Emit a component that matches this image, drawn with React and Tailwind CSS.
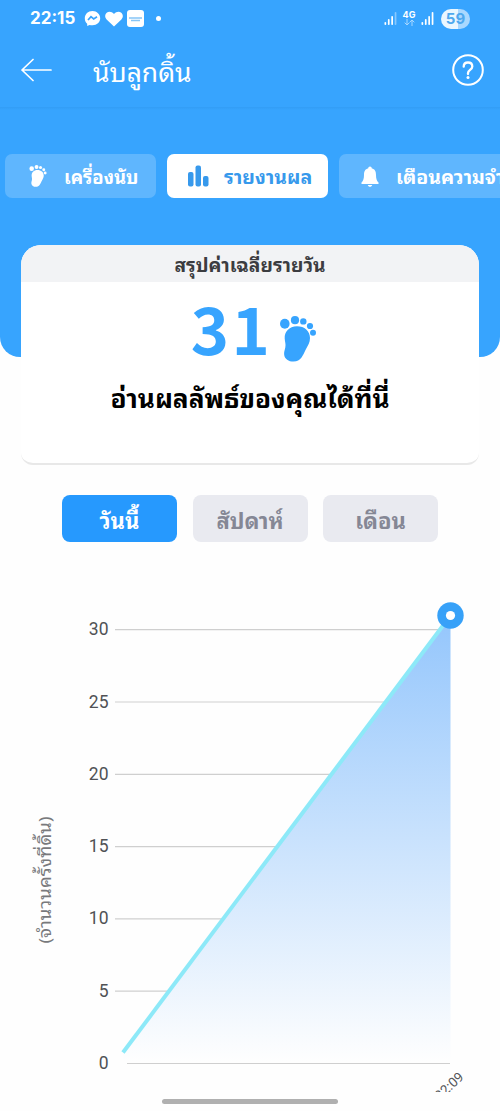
import React from 'react';

const THAI = "font-['Noto_Sans_Thai_Looped','Noto_Sans_Thai','Noto_Sans',sans-serif]";

function Foot({ className }) {
  return (
    <svg viewBox="0 0 36 46" className={className} fill="currentColor">
      <ellipse cx="4.8" cy="7.8" rx="4.8" ry="5" />
      <circle cx="15" cy="4.2" r="4.1" />
      <circle cx="23.3" cy="5.4" r="3.2" />
      <circle cx="30" cy="10" r="3.1" />
      <circle cx="33" cy="16.8" r="3" />
      <path d="M17 10.3C9 10.3 4.3 16 4.7 22.500C4.900 26 6 28 5.300 31.500C4.700 34.500 3.800 36 4.200 39C4.800 43 8.500 45.600 13.500 45.600C21 45.600 23 39 25.500 34C28 29.500 30 26.500 30 22C30 15 24.500 10.300 17 10.300Z" />
    </svg>
  );
}

function Signal({ faded }) {
  return (
    <svg width="13" height="15" viewBox="0 0 13 15" fill="#fff">
      <rect x="0.500" y="11" width="1.700" height="3" rx="0.800" />
      <rect x="3.900" y="8" width="1.700" height="6" rx="0.800" />
      <rect x="7.300" y="5" width="1.700" height="9" rx="0.800" />
      <rect x="10.700" y="1" width="1.700" height="13" rx="0.800" opacity={faded ? 0.4 : 1} />
    </svg>
  );
}

function StatusBar() {
  return (
    <div className="flex h-[37px] items-center text-white">
      <span className="ml-[30px] w-[46px] text-[17px] leading-none font-bold font-[Inter,sans-serif] whitespace-nowrap">22:15</span>
      <svg className="ml-2" width="17" height="17" viewBox="0 0 17 17">
        <path d="M8.500 1C4 1 .8 4.200.8 8.300c0 2.300.9 4.200 2.400 5.500V16l2.300-1.100c1 .3 1.900.4 3 .4 4.400 0 7.700-3.100 7.700-7S12.900 1 8.500 1Z" fill="#fff" />
        <path d="m4 10 3-3.300 2.700 2.200L13 6.800" fill="none" stroke="#37a4fe" strokeWidth="1.700" />
      </svg>
      <svg className="ml-1" width="18" height="16" viewBox="0 0 18 16" fill="#fff">
        <path d="M9 15.500 1.600 8.400C-.4 6.400-.2 3.300 1.700 1.700 3.700 0 6.900.4 9 3c2.100-2.600 5.300-3 7.300-1.300 1.900 1.600 2.100 4.700.1 6.700Z" />
      </svg>
      <svg className="ml-1" width="17" height="17" viewBox="0 0 17 17">
        <rect width="17" height="17" rx="3" fill="#fff" />
        <path d="M2 8h13M4 10.500h9" stroke="#87c5f6" strokeWidth="1.300" />
      </svg>
      <i className="ml-[12px] size-[5px] rounded-full bg-white" />
      <div className="mr-[30px] ml-auto flex items-center">
        <Signal faded />
        <div className="ml-[6px] flex w-3 flex-col items-center">
          <span className="text-[9px] leading-[8px] font-bold font-[Inter,sans-serif]">4G</span>
          <svg width="11" height="7" viewBox="0 0 11 7" fill="none" stroke="#a8d7ff" strokeWidth="1">
            <path d="M3 0v6M.7 3.700 3 6l2.300-2.300M8 7V1M5.700 3.300 8 1l2.300 2.300" />
          </svg>
        </div>
        <div className="ml-[6px] flex"><Signal /></div>
        <div className="ml-[7px] flex h-5 w-[29px] items-center justify-center rounded-full bg-[linear-gradient(90deg,#eaf7ff_59%,#a9d8ff_59%)] text-[15px] leading-none font-bold text-[#4fa9ee] font-[Inter,sans-serif]">59</div>
      </div>
    </div>
  );
}

function Chart() {
  const ticks = [30, 25, 20, 15, 10, 5, 0];
  return (
    <svg width="500" height="500" viewBox="0 592 500 500" className="block">
      <defs>
        <linearGradient id="area" x1="0" y1="0" x2="0" y2="1">
          <stop offset="0" stopColor="#94c6fc" />
          <stop offset="1" stopColor="#fefefe" />
        </linearGradient>
      </defs>
      {ticks.map((t) => {
        const y = 1063.5 - t * 14.46;
        return (
          <g key={t}>
            <line x1={t === 0 ? 127 : 115} x2="450" y1={y} y2={y} stroke="#cfcfcf" strokeWidth="1.200" />
            <text x="108.500" y={y + 5.5} textAnchor="end" fontSize="17.500" fill="#505255" className="font-[Roboto,sans-serif]">{t}</text>
          </g>
        );
      })}
      <path d="M123 1052.500 450.500 615.500V1062H123Z" fill="url(#area)" />
      <path d="M123 1052.500 450.500 615.500" stroke="#8de9f8" strokeWidth="4" strokeLinecap="butt" />
      <circle cx="450.500" cy="615.500" r="13.200" fill="#37a1f8" />
      <circle cx="450.500" cy="615.500" r="4.600" fill="#fff" />
      <text transform="translate(51 880) rotate(-90)" textAnchor="middle" textLength="127" lengthAdjust="spacingAndGlyphs" fontSize="17" fill="#78797c" className={THAI}>(จำนวนครั้งที่ดิ้น)</text>
      <text transform="translate(464.500 1078) rotate(-43)" textAnchor="end" fontSize="13.500" fill="#55575a" className="font-[Roboto,sans-serif]">22:09</text>
    </svg>
  );
}

export default function App() {
  return (
    <div className={`flex h-[1111px] w-[500px] flex-col overflow-hidden bg-[#fefefe] ${THAI}`}>
      <header className="h-[107px] shrink-0 bg-[#37a4fe]">
        <StatusBar />
        <div className="flex h-[66px] items-center text-white">
          <svg className="ml-[21px]" width="31" height="24" viewBox="0 0 31 24" fill="none" stroke="#fff" strokeWidth="1.700" strokeLinecap="round" strokeLinejoin="round">
            <path d="M12 1.500 1 12l11 10.500M1 12h29" />
          </svg>
          <h1 className="ml-[41px] text-[26.500px] leading-none whitespace-nowrap">นับลูกดิ้น</h1>
          <svg className="mr-4 ml-auto" width="32" height="32" viewBox="0 0 32 32" fill="none" stroke="#fff" strokeWidth="2">
            <circle cx="16" cy="16" r="14.800" />
            <path d="M11.700 12.700c0-2.500 1.800-4.200 4.300-4.200s4.300 1.600 4.300 4c0 3.300-4.300 3.500-4.300 6.500v1" strokeWidth="2.300" strokeLinecap="round" />
            <circle cx="16" cy="23.500" r="1.500" fill="#fff" stroke="none" />
          </svg>
        </div>
      </header>
      <section className="h-[250px] shrink-0 rounded-b-[20px] bg-[linear-gradient(#329df5,#37a4fe_3px)]">
        <nav className="mt-[47px] ml-[5px] flex gap-[11px] overflow-hidden text-[18.500px] leading-none font-bold text-white">
          <div className="flex h-11 w-[151px] shrink-0 items-center rounded-[7px] bg-[#5fb6fe] pl-[24px]">
            <Foot className="h-[22px] w-[18px]" />
            <span className="ml-[17px] whitespace-nowrap">เครื่องนับ</span>
          </div>
          <div className="flex h-11 w-[161px] shrink-0 items-center rounded-[7px] bg-white pl-[21px] text-[#3799ec]">
            <svg width="21" height="22" viewBox="0 0 21 22" fill="currentColor">
              <rect y="7" width="5.500" height="14.500" rx="2" />
              <rect x="7.500" y="0.500" width="5.500" height="21" rx="2" />
              <rect x="15" y="11" width="5.500" height="10.500" rx="2" />
            </svg>
            <span className="ml-[15px] text-[19.500px] whitespace-nowrap">รายงานผล</span>
          </div>
          <div className="flex h-11 w-[196px] shrink-0 items-center rounded-[7px] bg-[#5fb6fe] pl-[22px]">
            <svg width="18" height="21" viewBox="0 0 18 21" fill="currentColor">
              <path d="M9 0.500c1.100 0 1.700.8 1.700 1.700C14 3 15 5.500 15 9c0 4 .8 5.700 2.500 7.500V18H.5v-1.500C2.200 14.700 3 13 3 9c0-3.500 1-6 4.300-6.800C7.300 1.300 7.900.5 9 .5ZM6.800 19h4.400c-.3 1.200-1.100 1.800-2.200 1.800S7.100 20.200 6.800 19Z" />
            </svg>
            <span className="ml-[17px] text-[19.500px] whitespace-nowrap">เตือนความจำ</span>
          </div>
        </nav>
      </section>
      <section className="z-10 mx-[21px] mt-[-112px] flex h-[220px] shrink-0 flex-col items-center overflow-hidden rounded-t-[20px] rounded-b-[12px] border-b-2 border-[#e8e8e8] bg-white">
        <h2 className="flex h-[37px] w-full items-center justify-center bg-[#f2f3f5] text-[19.200px] leading-none font-bold text-[#3b3c40]">สรุปค่าเฉลี่ยรายวัน</h2>
        <div className="mt-[15px] flex h-[60px] items-center pl-[7px] text-[#37a4fe]">
          <span className="text-[65px] tracking-[2.500px] leading-none font-bold font-['Noto_Sans_CJK_SC',sans-serif]">31</span>
          <Foot className="mt-[23px] ml-[8px] h-[46px] w-9" />
        </div>
        <p className="mt-[26px] text-[26.200px] leading-none font-bold whitespace-nowrap text-black">อ่านผลลัพธ์ของคุณได้ที่นี่</p>
      </section>
      <div className="mt-[30px] ml-[62px] flex shrink-0 gap-[15.500px] text-[22px] leading-none font-bold text-[#858795]">
        <button className="h-[47px] w-[115px] rounded-[8px] bg-[#2699fe] text-white">วันนี้</button>
        <button className="h-[47px] w-[115px] rounded-[8px] bg-[#e9eaf0]">สัปดาห์</button>
        <button className="h-[47px] w-[115px] rounded-[8px] bg-[#e9eaf0]">เดือน</button>
      </div>
      <div className="mt-[50px] h-[500px] shrink-0"><Chart /></div>
      <div className="mt-[7px] ml-[162px] h-[5px] w-[176px] shrink-0 rounded-full bg-[#b0b0b0]" />
    </div>
  );
}
